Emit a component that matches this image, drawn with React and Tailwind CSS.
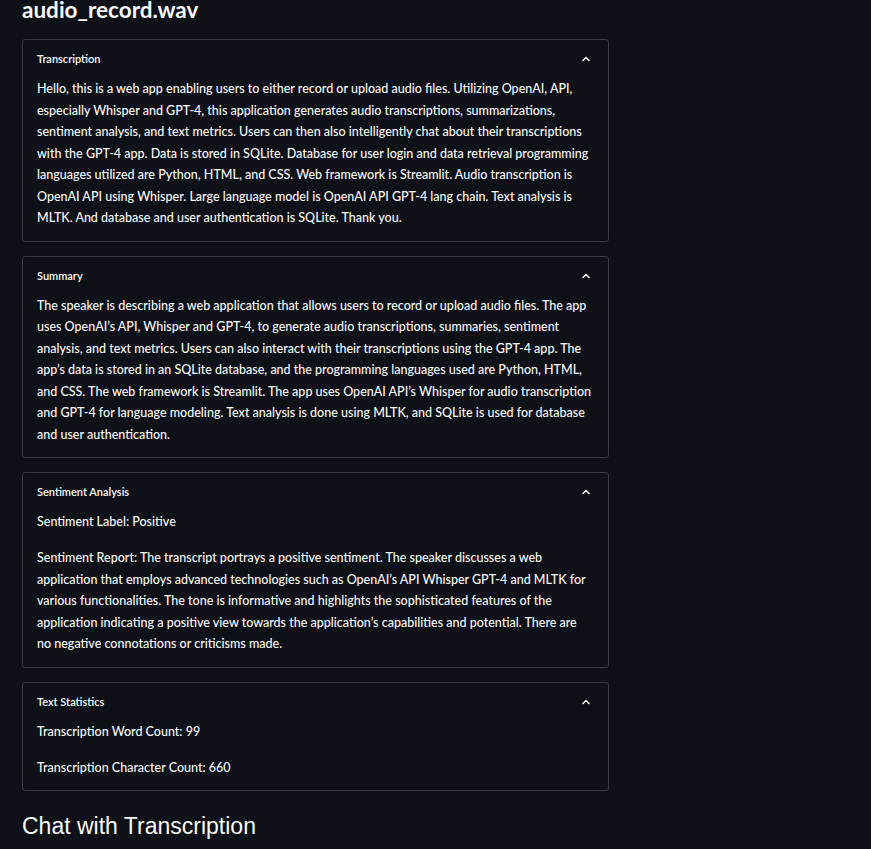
import React from "react";

function Chevron() {
  return (
    <svg width="10" height="10" viewBox="0 0 10 10" className="text-[#fafafa]">
      <path d="M2 6.5 L5 3.5 L8 6.5" fill="none" stroke="currentColor" strokeWidth="1.6" strokeLinecap="round" strokeLinejoin="round" />
    </svg>
  );
}

function Expander({ title, children }) {
  return (
    <div className="border border-[#3a3c44] rounded-[3px] w-[587px]">
      <div className="flex items-center justify-between pl-[14px] pr-[17px] pt-[12px] h-[14px] box-content">
        <span className="text-[11px] font-semibold leading-[14px]">{title}</span>
        <Chevron />
      </div>
      <div className="px-[14px] pt-[12px] pb-[12px] text-[12.5px] font-medium leading-[21.5px] flex flex-col gap-[14.5px]">
        {children}
      </div>
    </div>
  );
}

function Lines({ lines }) {
  return (
    <p className="whitespace-nowrap">
      {lines.map((l, i) => (
        <React.Fragment key={i}>
          {l}
          {i < lines.length - 1 && <br />}
        </React.Fragment>
      ))}
    </p>
  );
}

export default function App() {
  return (
    <div className="min-h-[849px] w-full bg-[#0e1117] text-[#fafafa] pl-[22px] font-[Lato,'Noto_Sans',sans-serif]">
      <div className="h-[39px] pt-[1px]">
        <h1 className="text-[22.5px] font-bold leading-[17px]">audio_record.wav</h1>
      </div>
      <div className="flex flex-col gap-[14px]">
        <Expander title="Transcription">
          <Lines
            lines={[
              "Hello, this is a web app enabling users to either record or upload audio files. Utilizing OpenAI, API,",
              "especially Whisper and GPT-4, this application generates audio transcriptions, summarizations,",
              "sentiment analysis, and text metrics. Users can then also intelligently chat about their transcriptions",
              "with the GPT-4 app. Data is stored in SQLite. Database for user login and data retrieval programming",
              "languages utilized are Python, HTML, and CSS. Web framework is Streamlit. Audio transcription is",
              "OpenAI API using Whisper. Large language model is OpenAI API GPT-4 lang chain. Text analysis is",
              "MLTK. And database and user authentication is SQLite. Thank you.",
            ]}
          />
        </Expander>
        <Expander title="Summary">
          <Lines
            lines={[
              "The speaker is describing a web application that allows users to record or upload audio files. The app",
              "uses OpenAI\u2019s API, Whisper and GPT-4, to generate audio transcriptions, summaries, sentiment",
              "analysis, and text metrics. Users can also interact with their transcriptions using the GPT-4 app. The",
              "app\u2019s data is stored in an SQLite database, and the programming languages used are Python, HTML,",
              "and CSS. The web framework is Streamlit. The app uses OpenAI API\u2019s Whisper for audio transcription",
              "and GPT-4 for language modeling. Text analysis is done using MLTK, and SQLite is used for database",
              "and user authentication.",
            ]}
          />
        </Expander>
        <Expander title="Sentiment Analysis">
          <Lines lines={["Sentiment Label: Positive"]} />
          <Lines
            lines={[
              "Sentiment Report: The transcript portrays a positive sentiment. The speaker discusses a web",
              "application that employs advanced technologies such as OpenAI\u2019s API Whisper GPT-4 and MLTK for",
              "various functionalities. The tone is informative and highlights the sophisticated features of the",
              "application indicating a positive view towards the application\u2019s capabilities and potential. There are",
              "no negative connotations or criticisms made.",
            ]}
          />
        </Expander>
        <Expander title="Text Statistics">
          <Lines lines={["Transcription Word Count: 99"]} />
          <Lines lines={["Transcription Character Count: 660"]} />
        </Expander>
      </div>
      <h2 className="text-[23px] leading-[26px] mt-[22px] font-['Liberation_Sans',Arial,sans-serif]">
        Chat with Transcription
      </h2>
    </div>
  );
}
